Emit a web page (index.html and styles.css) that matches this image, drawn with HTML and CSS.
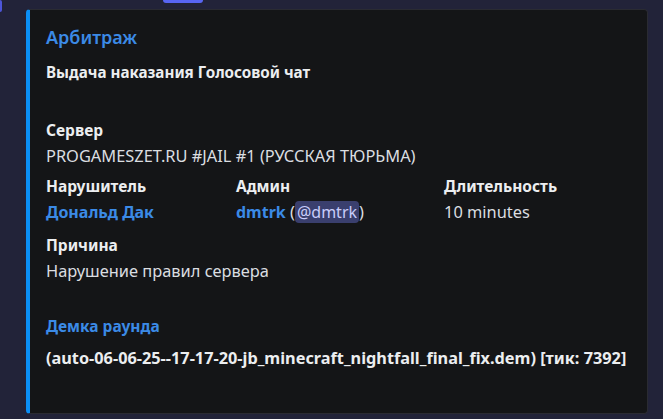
FILE: index.html
```html
<!DOCTYPE html>
<html>
<head>
<meta charset="utf-8">
<link rel="stylesheet" href="styles.css">
</head>
<body>
<div class="page">
  <div class="gutter"><div class="gutter-bar"></div></div>
  <div class="main">
    <div class="top-strip"><div class="pill"></div></div>
    <div class="embed">
      <div class="title">Арбитраж</div>
      <div class="desc">Выдача наказания Голосовой чат</div>
      <div class="fields">
        <div class="field full">
          <div class="fname">Сервер</div>
          <div class="fvalue">PROGAMESZET.RU #JAIL #1 (РУССКАЯ ТЮРЬМА)</div>
        </div>
        <div class="field">
          <div class="fname">Нарушитель</div>
          <div class="fvalue"><span class="link">Дональд Дак</span></div>
        </div>
        <div class="field">
          <div class="fname">Админ</div>
          <div class="fvalue"><span class="link">dmtrk</span> (<span class="mention">@dmtrk</span>)</div>
        </div>
        <div class="field">
          <div class="fname">Длительность</div>
          <div class="fvalue">10 minutes</div>
        </div>
        <div class="field full reason">
          <div class="fname">Причина</div>
          <div class="fvalue">Нарушение правил сервера</div>
        </div>
      </div>
      <div class="demo-link">Демка раунда</div>
      <div class="demo-file">(auto-06-06-25--17-17-20-jb_minecraft_nightfall_final_fix.dem) [тик: 7392]</div>
    </div>
  </div>
</div>
</body>
</html>
```
FILE: styles.css
```css
html, body {
  margin: 0;
  padding: 0;
  background: #222339;
  height: 100%;
  overflow: hidden;
}
body {
  font-family: "Noto Sans", "Open Sans", sans-serif;
  color: #dbdee1;
}
.page {
  display: flex;
  width: 663px;
  height: 419px;
}
.gutter {
  width: 26px;
  flex: none;
}
.gutter-bar {
  width: 2px;
  height: 12px;
  background: #4d55d8;
  border-radius: 0 2px 2px 0;
}
.main {
  width: 622px;
  flex: none;
  display: flex;
  flex-direction: column;
}
.top-strip {
  height: 9px;
  flex: none;
}
.pill {
  margin-left: 137px;
  width: 40px;
  height: 3px;
  background: #5865f2;
  border-radius: 0 0 4px 4px;
}
.embed {
  height: 405px;
  box-sizing: border-box;
  background: #141517;
  border: 1px solid #2a2b32;
  border-left: 4px solid #0b8ff6;
  border-radius: 4px;
  padding: 15px 16px 0 16px;
}
.title {
  font-size: 18px;
  line-height: 24px;
  font-weight: 600;
  color: #3b8ae6;
}
.desc {
  margin-top: 12px;
  font-size: 15.2px;
  line-height: 22px;
  font-weight: 700;
  color: #eceef0;
}
.fields {
  margin-top: 35px;
  display: grid;
  grid-template-columns: 190px 208px 1fr;
  row-gap: 6px;
}
.field.full {
  grid-column: 1 / -1;
}
.field.reason {
  margin-top: 2px;
}
.fname {
  font-size: 15.5px;
  line-height: 25px;
  font-weight: 700;
  color: #eceef0;
}
.fvalue {
  font-size: 16.4px;
  line-height: 25px;
  color: #dbdee1;
}
.link {
  color: #3b8ae6;
  font-weight: 700;
  font-size: 16px;
}
.mention {
  background: #3a3f6e;
  color: #c9cdfb;
  border-radius: 4px;
  padding: 0 2px;
  font-size: 16px;
}
.demo-link {
  margin-top: 32px;
  font-size: 15.5px;
  line-height: 22px;
  font-weight: 700;
  color: #3b8ae6;
}
.demo-file {
  margin-top: 10px;
  font-size: 16.3px;
  line-height: 22px;
  font-weight: 700;
  color: #eceef0;
}
```
